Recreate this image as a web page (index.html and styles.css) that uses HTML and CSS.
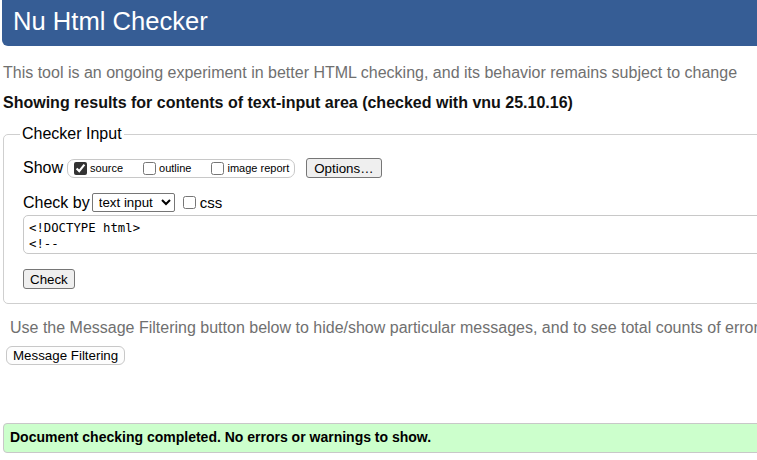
FILE: index.html
```html
<!DOCTYPE html>
<html lang="en">
<head>
<meta charset="utf-8">
<title>Nu Html Checker</title>
<link rel="stylesheet" href="styles.css">
</head>
<body>
<h1 class="header">Nu Html Checker</h1>
<p class="intro">This tool is an ongoing experiment in better HTML checking, and its behavior remains subject to change</p>
<p class="results">Showing results for contents of text-input area (checked with vnu 25.10.16)</p>
<form class="form">
  <fieldset class="fieldset">
    <legend class="legend">Checker Input</legend>
    <div class="row show-row">
      <span class="row-label">Show</span>
      <div class="show-group">
        <input type="checkbox" class="cb" checked><span class="cb-label">source</span>
        <input type="checkbox" class="cb cb-spaced"><span class="cb-label">outline</span>
        <input type="checkbox" class="cb cb-spaced"><span class="cb-label">image report</span>
      </div>
      <button type="button" class="btn btn-options">Options…</button>
    </div>
    <div class="row checkby-row">
      <span class="row-label">Check by</span>
      <select class="select"><option>text input</option></select>
      <input type="checkbox" class="cb cb-css"><span class="css-label">css</span>
    </div>
    <textarea class="source" spellcheck="false">&lt;!DOCTYPE html&gt;
&lt;!--</textarea>
    <button type="button" class="btn btn-check">Check</button>
  </fieldset>
</form>
<p class="filter-note">Use the Message Filtering button below to hide/show particular messages, and to see total counts of errors and warnings.</p>
<button type="button" class="btn-filter">Message Filtering</button>
<div class="success">Document checking completed. No errors or warnings to show.</div>
</body>
</html>
```

FILE: styles.css
```css
html {
  overflow: hidden;
}

body {
  margin: 0;
  padding: 0 0 0 3px;
  width: 1100px;
  font-family: "Liberation Sans", Arial, sans-serif;
  color: #000;
  background: #fff;
}

.header {
  margin: 0 0 0 -1px;
  height: 30px;
  padding: 6px 11px 10px;
  background: #365d95;
  color: #fff;
  font-size: 25.6px;
  font-weight: normal;
  line-height: 30px;
  border-bottom-left-radius: 6px;
}

.intro {
  margin: 18px 0 0;
  font-size: 16px;
  line-height: 18px;
  color: #707070;
  white-space: nowrap;
}

.results {
  margin: 12px 0 0;
  font-size: 16px;
  line-height: 18px;
  font-weight: bold;
  color: #111;
  white-space: nowrap;
}

.form {
  margin: 13px 0 0;
}

.fieldset {
  margin: 0;
  padding: 0 0 14px 19px;
  border: 1px solid #cfcfcf;
  border-radius: 5px;
}

.legend {
  margin-left: -3px;
  padding: 0 2px;
  font-size: 16px;
  line-height: 18px;
}

.row {
  display: flex;
  align-items: center;
}

.show-row {
  margin-top: 15px;
  height: 20px;
}

.row-label {
  font-size: 16px;
  line-height: 18px;
}

.show-group {
  display: flex;
  align-items: center;
  box-sizing: border-box;
  height: 19px;
  margin-left: 4px;
  padding: 0 5px 0 6px;
  border: 1px solid #c8c8c8;
  border-radius: 7px;
}

.cb {
  width: 13px;
  height: 13px;
  margin: 0;
  accent-color: #333;
}

.cb-spaced {
  margin-left: 20px;
}

.cb-label {
  margin-left: 3px;
  font-size: 11px;
  line-height: 13px;
}

.btn {
  box-sizing: border-box;
  height: 20px;
  padding: 0 7px;
  font-family: "Liberation Sans", Arial, sans-serif;
  font-size: 13.33px;
  color: #000;
  background: #efefef;
  border: 1px solid #767676;
  border-radius: 3px;
}

.btn-options {
  margin-left: 11px;
}

.checkby-row {
  margin-top: 15px;
  height: 19px;
}

.select {
  box-sizing: border-box;
  width: 83px;
  height: 19px;
  margin: 0 0 0 2px;
  padding: 0 0 0 2px;
  font-family: "Liberation Sans", Arial, sans-serif;
  font-size: 13.33px;
  color: #000;
  background: #fff;
  border: 1px solid #767676;
  border-radius: 2px;
}

.cb-css {
  margin-left: 8px;
}

.css-label {
  margin-left: 4px;
  font-size: 15px;
  line-height: 17px;
}

.source {
  display: block;
  box-sizing: border-box;
  width: 1000px;
  height: 39px;
  margin: 3px 0 0;
  padding: 4px 5px 2px;
  font-family: "DejaVu Sans Mono", "Liberation Mono", monospace;
  font-size: 12.3px;
  line-height: 16px;
  color: #000;
  border: 1px solid #c8c8c8;
  border-radius: 5px;
  resize: none;
  overflow: hidden;
}

.btn-check {
  display: block;
  margin-top: 15px;
  padding: 0 6px;
}

.filter-note {
  margin: 15px 0 0 7px;
  font-size: 16px;
  line-height: 18px;
  color: #707070;
  white-space: nowrap;
}

.btn-filter {
  display: block;
  box-sizing: border-box;
  height: 19px;
  margin: 9px 0 0 3px;
  padding: 0 6px;
  font-family: "Liberation Sans", Arial, sans-serif;
  font-size: 13.33px;
  color: #000;
  background: #fdfdfd;
  border: 1px solid #c8c8c8;
  border-radius: 6px;
}

.success {
  margin-top: 58px;
  padding: 5px 6px 7px;
  font-size: 14px;
  line-height: 16px;
  font-weight: bold;
  background: #ccffcc;
  border: 1px solid #c8c8c8;
  border-radius: 4px;
}
```
